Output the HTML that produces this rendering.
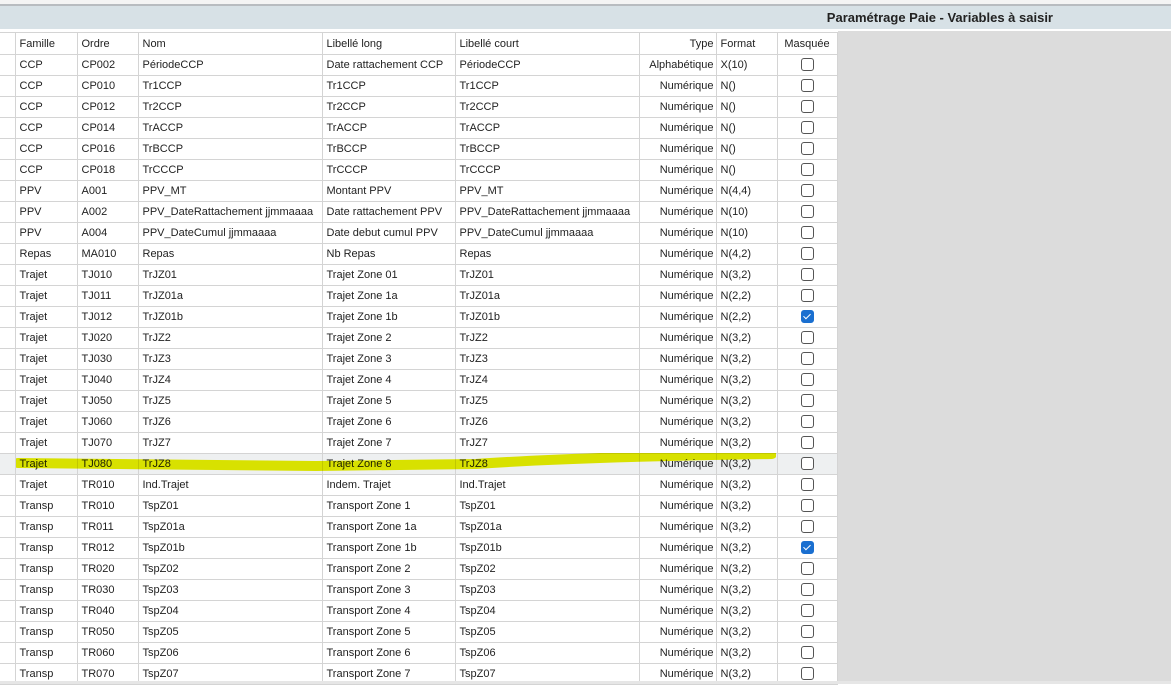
<!DOCTYPE html><html><head><meta charset="utf-8"><style>
body{margin:0;width:1171px;height:684px;overflow:hidden;background:#fff;font-family:"Liberation Sans",Tahoma,sans-serif;font-size:11px;color:#222;position:relative}
#top{position:absolute;left:0;top:0;width:1171px;height:4px;background:#f4f4f4;border-bottom:2px solid #b8bcc0}
#band{position:absolute;left:0;top:6px;width:1171px;height:23px;background:#d7e1e6}
#band span{position:absolute;right:118px;top:4px;font-weight:bold;font-size:13px;color:#222}
#gray{position:absolute;left:838px;top:31px;width:333px;height:653px;background:#dcdcdc}
table{position:absolute;left:0;top:32px;border-collapse:collapse;table-layout:fixed}
td{height:20px;padding:0 4px;border:1px solid #d4d4d4;white-space:nowrap;overflow:hidden;line-height:20px}
tr.h td{height:21px}
td.r{text-align:right;padding-right:2px}
td.c{text-align:center;padding:0}
tr td:first-child{border-left:none}
.cb{display:inline-block;width:11px;height:11px;border:1px solid #555;border-radius:3px;vertical-align:middle;position:relative;top:-1px;background:#fff;box-sizing:content-box}
.ck{background:#1a6fd0;border-color:#1a6fd0}
.ck:after{content:"";position:absolute;left:3px;top:1px;width:3px;height:6px;border:solid #fff;border-width:0 1.3px 1.3px 0;transform:rotate(45deg)}
tr.sel td{background:#eef0f1;border-top:1px dotted #777;border-bottom:1px dotted #777}
#mark{position:absolute;left:16px;top:453px;width:760px;height:20px;pointer-events:none;mix-blend-mode:multiply}
#bot{position:absolute;left:0;top:681px;width:1171px;height:3px;background:#e6e6e6}
</style></head><body>
<div id="top"></div><div id="band"><span>Paramétrage Paie - Variables à saisir</span></div>
<div id="gray"></div>
<table>
<colgroup><col style="width:15px"><col style="width:62px"><col style="width:61px"><col style="width:184px"><col style="width:133px"><col style="width:184px"><col style="width:77px"><col style="width:61px"><col style="width:60px"></colgroup>
<tr class="h"><td></td><td>Famille</td><td>Ordre</td><td>Nom</td><td>Libellé long</td><td>Libellé court</td><td class="r">Type</td><td>Format</td><td class="c">Masquée</td></tr>
<tr><td></td><td>CCP</td><td>CP002</td><td>PériodeCCP</td><td>Date rattachement CCP</td><td>PériodeCCP</td><td class="r">Alphabétique</td><td>X(10)</td><td class="c"><span class="cb"></span></td></tr>
<tr><td></td><td>CCP</td><td>CP010</td><td>Tr1CCP</td><td>Tr1CCP</td><td>Tr1CCP</td><td class="r">Numérique</td><td>N()</td><td class="c"><span class="cb"></span></td></tr>
<tr><td></td><td>CCP</td><td>CP012</td><td>Tr2CCP</td><td>Tr2CCP</td><td>Tr2CCP</td><td class="r">Numérique</td><td>N()</td><td class="c"><span class="cb"></span></td></tr>
<tr><td></td><td>CCP</td><td>CP014</td><td>TrACCP</td><td>TrACCP</td><td>TrACCP</td><td class="r">Numérique</td><td>N()</td><td class="c"><span class="cb"></span></td></tr>
<tr><td></td><td>CCP</td><td>CP016</td><td>TrBCCP</td><td>TrBCCP</td><td>TrBCCP</td><td class="r">Numérique</td><td>N()</td><td class="c"><span class="cb"></span></td></tr>
<tr><td></td><td>CCP</td><td>CP018</td><td>TrCCCP</td><td>TrCCCP</td><td>TrCCCP</td><td class="r">Numérique</td><td>N()</td><td class="c"><span class="cb"></span></td></tr>
<tr><td></td><td>PPV</td><td>A001</td><td>PPV_MT</td><td>Montant PPV</td><td>PPV_MT</td><td class="r">Numérique</td><td>N(4,4)</td><td class="c"><span class="cb"></span></td></tr>
<tr><td></td><td>PPV</td><td>A002</td><td>PPV_DateRattachement jjmmaaaa</td><td>Date rattachement PPV</td><td>PPV_DateRattachement jjmmaaaa</td><td class="r">Numérique</td><td>N(10)</td><td class="c"><span class="cb"></span></td></tr>
<tr><td></td><td>PPV</td><td>A004</td><td>PPV_DateCumul jjmmaaaa</td><td>Date debut cumul PPV</td><td>PPV_DateCumul jjmmaaaa</td><td class="r">Numérique</td><td>N(10)</td><td class="c"><span class="cb"></span></td></tr>
<tr><td></td><td>Repas</td><td>MA010</td><td>Repas</td><td>Nb Repas</td><td>Repas</td><td class="r">Numérique</td><td>N(4,2)</td><td class="c"><span class="cb"></span></td></tr>
<tr><td></td><td>Trajet</td><td>TJ010</td><td>TrJZ01</td><td>Trajet Zone 01</td><td>TrJZ01</td><td class="r">Numérique</td><td>N(3,2)</td><td class="c"><span class="cb"></span></td></tr>
<tr><td></td><td>Trajet</td><td>TJ011</td><td>TrJZ01a</td><td>Trajet Zone 1a</td><td>TrJZ01a</td><td class="r">Numérique</td><td>N(2,2)</td><td class="c"><span class="cb"></span></td></tr>
<tr><td></td><td>Trajet</td><td>TJ012</td><td>TrJZ01b</td><td>Trajet Zone 1b</td><td>TrJZ01b</td><td class="r">Numérique</td><td>N(2,2)</td><td class="c"><span class="cb ck"></span></td></tr>
<tr><td></td><td>Trajet</td><td>TJ020</td><td>TrJZ2</td><td>Trajet Zone 2</td><td>TrJZ2</td><td class="r">Numérique</td><td>N(3,2)</td><td class="c"><span class="cb"></span></td></tr>
<tr><td></td><td>Trajet</td><td>TJ030</td><td>TrJZ3</td><td>Trajet Zone 3</td><td>TrJZ3</td><td class="r">Numérique</td><td>N(3,2)</td><td class="c"><span class="cb"></span></td></tr>
<tr><td></td><td>Trajet</td><td>TJ040</td><td>TrJZ4</td><td>Trajet Zone 4</td><td>TrJZ4</td><td class="r">Numérique</td><td>N(3,2)</td><td class="c"><span class="cb"></span></td></tr>
<tr><td></td><td>Trajet</td><td>TJ050</td><td>TrJZ5</td><td>Trajet Zone 5</td><td>TrJZ5</td><td class="r">Numérique</td><td>N(3,2)</td><td class="c"><span class="cb"></span></td></tr>
<tr><td></td><td>Trajet</td><td>TJ060</td><td>TrJZ6</td><td>Trajet Zone 6</td><td>TrJZ6</td><td class="r">Numérique</td><td>N(3,2)</td><td class="c"><span class="cb"></span></td></tr>
<tr><td></td><td>Trajet</td><td>TJ070</td><td>TrJZ7</td><td>Trajet Zone 7</td><td>TrJZ7</td><td class="r">Numérique</td><td>N(3,2)</td><td class="c"><span class="cb"></span></td></tr>
<tr class="sel"><td></td><td>Trajet</td><td>TJ080</td><td>TrJZ8</td><td>Trajet Zone 8</td><td>TrJZ8</td><td class="r">Numérique</td><td>N(3,2)</td><td class="c"><span class="cb"></span></td></tr>
<tr><td></td><td>Trajet</td><td>TR010</td><td>Ind.Trajet</td><td>Indem. Trajet</td><td>Ind.Trajet</td><td class="r">Numérique</td><td>N(3,2)</td><td class="c"><span class="cb"></span></td></tr>
<tr><td></td><td>Transp</td><td>TR010</td><td>TspZ01</td><td>Transport Zone 1</td><td>TspZ01</td><td class="r">Numérique</td><td>N(3,2)</td><td class="c"><span class="cb"></span></td></tr>
<tr><td></td><td>Transp</td><td>TR011</td><td>TspZ01a</td><td>Transport Zone 1a</td><td>TspZ01a</td><td class="r">Numérique</td><td>N(3,2)</td><td class="c"><span class="cb"></span></td></tr>
<tr><td></td><td>Transp</td><td>TR012</td><td>TspZ01b</td><td>Transport Zone 1b</td><td>TspZ01b</td><td class="r">Numérique</td><td>N(3,2)</td><td class="c"><span class="cb ck"></span></td></tr>
<tr><td></td><td>Transp</td><td>TR020</td><td>TspZ02</td><td>Transport Zone 2</td><td>TspZ02</td><td class="r">Numérique</td><td>N(3,2)</td><td class="c"><span class="cb"></span></td></tr>
<tr><td></td><td>Transp</td><td>TR030</td><td>TspZ03</td><td>Transport Zone 3</td><td>TspZ03</td><td class="r">Numérique</td><td>N(3,2)</td><td class="c"><span class="cb"></span></td></tr>
<tr><td></td><td>Transp</td><td>TR040</td><td>TspZ04</td><td>Transport Zone 4</td><td>TspZ04</td><td class="r">Numérique</td><td>N(3,2)</td><td class="c"><span class="cb"></span></td></tr>
<tr><td></td><td>Transp</td><td>TR050</td><td>TspZ05</td><td>Transport Zone 5</td><td>TspZ05</td><td class="r">Numérique</td><td>N(3,2)</td><td class="c"><span class="cb"></span></td></tr>
<tr><td></td><td>Transp</td><td>TR060</td><td>TspZ06</td><td>Transport Zone 6</td><td>TspZ06</td><td class="r">Numérique</td><td>N(3,2)</td><td class="c"><span class="cb"></span></td></tr>
<tr><td></td><td>Transp</td><td>TR070</td><td>TspZ07</td><td>Transport Zone 7</td><td>TspZ07</td><td class="r">Numérique</td><td>N(3,2)</td><td class="c"><span class="cb"></span></td></tr>
</table>
<svg id="mark" viewBox="0 0 760 20"><path d="M2 10 L300 13 L460 11 Q560 4 756 1" stroke="#e8f000" stroke-width="10" fill="none" stroke-linecap="round"/></svg>
<div id="bot"></div>
</body></html>
